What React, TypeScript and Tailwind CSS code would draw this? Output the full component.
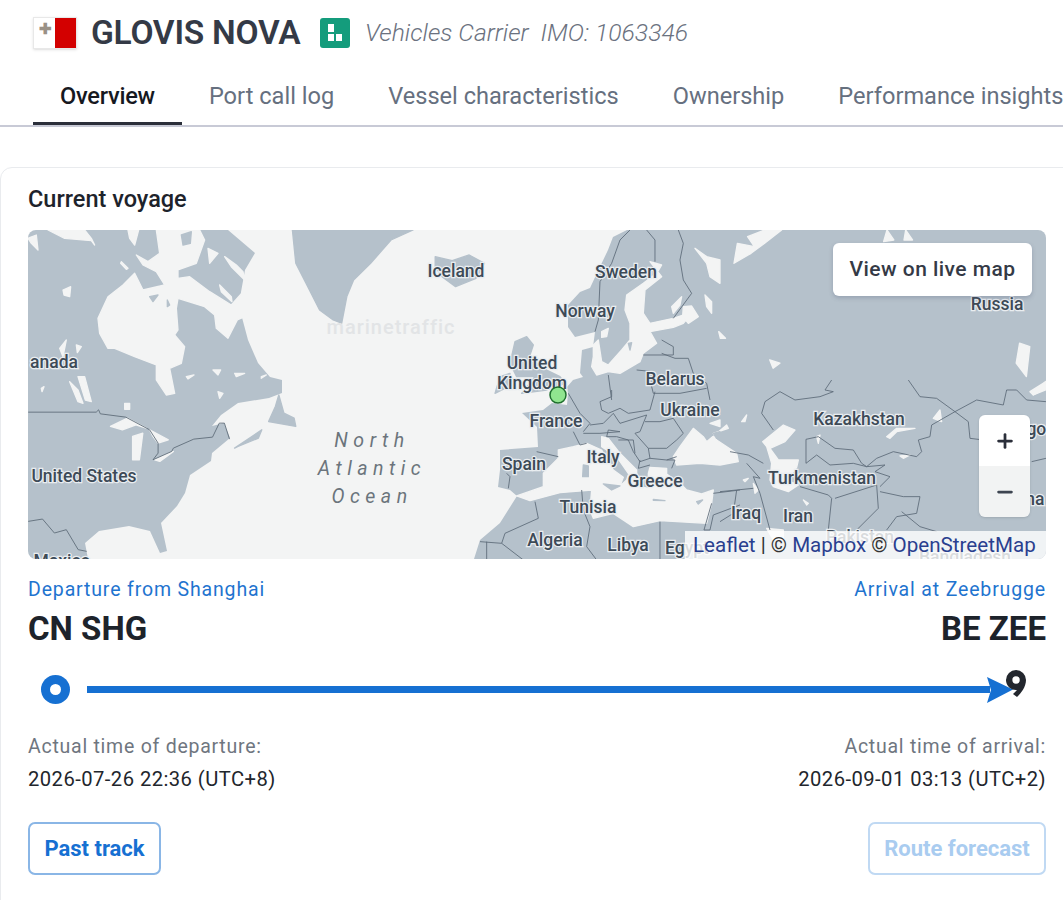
import { Plus, Minus } from "lucide-react";

const TABS = ["Port call log", "Vessel characteristics", "Ownership", "Performance insights"];

const LAND = "#b5c1cb";
const SEA = "#f3f4f4";
const BORDER = "#5d6b78";

// open ocean, page coordinates
const atlantic =
  "M228,230 L255,253 L245,270 L241,292 L240,310 L248,340 L258,363 L270,377 L282,380 L282,393 L269,398 L238,403 L221,415 L212,426 L224,423 L230,438 L212,453 L211,461 L190,475 L185,493 L177,506 L161,523 L167,551 L160,553 L150,531 L129,526 L99,531 L85,543 L88,559 L474,559 L480,540 L500,523 L517,496 L510,490 L498,487 L500,470 L500,450 L538,447 L537,427 L522,413 L543,410 L552,403 L567,405 L568,393 L567,387 L573,380 L583,377 L580,373 L582,350 L593,347 L595,332 L575,337 L568,327 L568,305 L580,292 L590,288 L597,273 L608,250 L613,237 L627,230 Z";

// crop of the Canadian north, 3x, origin 28,230
const canadaWater = [
  "M210,265 L240,200 L285,165 L320,130 L345,180 L410,165 L385,125 L345,105 L325,75 L360,95 L395,70 L385,0 L515,0 L530,30 L505,100 L450,120 L450,145 L485,140 L545,185 L610,225 L650,180 L650,260 L628,270 L600,325 L565,295 L560,255 L530,230 L450,205 L445,235 L450,300 L440,315 L470,350 L460,400 L425,415 L440,490 L415,495 L385,450 L385,405 L320,380 L260,355 L240,355 L215,310 Z",
  "M0,25 L25,15 L30,60 L10,40 Z",
  "M60,0 L170,0 L190,25 L200,45 L190,32 L110,25 Z",
  "M300,0 L332,0 L320,45 L305,25 Z",
  "M280,95 L300,115 L295,118 L278,100 Z",
  "M105,180 L128,170 L125,200 L108,195 Z",
  "M540,55 L570,70 L545,100 Z",
  "M590,80 L625,105 L645,125 L650,150 L610,110 Z",
  "M575,165 L610,200 L612,215 L580,185 Z",
  "M95,355 L115,330 L105,380 Z",
  "M145,345 L160,350 L148,368 Z",
  "M150,440 L170,440 L190,515 L172,510 Z",
  "M125,455 L150,480 L165,520 L150,515 Z",
  "M40,475 L48,470 L42,485 Z",
  "M475,440 L498,435 L480,447 Z",
  "M555,420 L578,420 L570,435 Z",
  "M620,430 L650,430 L625,440 Z",
  "M700,440 L715,435 L700,445 Z",
  "M570,485 L585,490 L575,505 Z",
  "M290,520 L305,520 L305,538 L290,538 Z",
];

const canadaIslands = [
  "M460,15 L490,5 L487,40 L465,45 Z",
  "M365,200 L390,195 L375,215 Z",
  "M418,210 L425,225 L418,230 Z",
];

// coordinates from the wider crop of the west half
const westLand = [
  "M860,0 L1215,0 L1150,30 L1090,100 L1040,150 L1020,200 L1005,280 L980,270 L940,240 L900,160 L870,100 Z",
  "M1280,80 L1330,92 L1380,75 L1425,100 L1400,145 L1340,170 L1300,140 L1280,110 Z",
  "M820,495 L835,550 L865,565 L870,590 L790,575 L810,530 Z",
  "M690,655 L770,600 L760,625 L700,650 Z",
];

const westWater = [
  "M325,590 L375,565 L430,595 L400,585 L360,600 Z",
  "M390,620 L420,610 L410,690 L390,690 Z",
  "M440,600 L495,630 L465,640 L450,620 Z",
  "M455,690 L510,665 L470,695 Z",
];

const westBorders = [
  "M83,547 L283,547 L290,540 L295,552 L370,562 L440,600 L465,640 L465,670 L450,690 L505,665 L510,655 L570,628 L625,622 L645,580 L660,580 L675,628",
  "M83,875 L125,868 L160,910 L195,900 L230,960 L255,965",
];

// northern Europe crop, 3x, origin 480,230
const balticWater = [
  "M340,345 L355,330 L365,395 L385,405 L425,360 L450,330 L450,280 L435,240 L440,195 L490,160 L530,130 L545,105 L510,95 L545,140 L495,180 L490,250 L510,280 L580,265 L640,245 L610,280 L580,292 L510,305 L530,340 L490,370 L480,395 L420,430 L385,425 L350,435 L335,410 L340,380 Z",
  "M610,230 L635,228 L655,260 L625,280 L608,260 Z",
  "M675,195 L695,215 L695,250 L680,230 Z",
  "M575,230 L605,200 L600,225 L580,250 Z",
  "M365,305 L385,295 L380,320 L365,322 Z",
  "M645,55 L680,80 L720,90 L720,160 L690,140 L680,100 Z",
];

const northLand = [
  "M105,335 L140,320 L160,345 L150,375 L170,400 L200,420 L240,440 L255,460 L200,480 L125,490 L165,440 L110,440 L90,400 Z",
  "M60,440 L90,430 L85,470 L45,490 Z",
  "M445,340 L455,338 L450,360 Z",
];

const northBorders = [
  "M450,0 L420,30 L395,100 L360,155 L355,270 L345,305",
  "M500,0 L525,30 L525,95",
  "M595,0 L610,40 L600,90 L610,150 L635,190 L580,265",
  "M545,330 L580,350 L580,375 L490,375 M545,370 L585,385 L625,385 L640,430 L680,460 L690,510",
  "M470,420 L520,425 L515,470 L520,490 L600,490 L680,475",
  "M385,435 L395,510",
];

// southern Europe crop, 3x, origin 480,390
const medWater = [
  "M110,318 L190,290 L190,250 L235,205 L235,180 L280,170 L320,160 L365,180 L400,240 L430,262 L420,288 L440,270 L445,255 L470,250 L480,290 L505,295 L505,250 L510,232 L560,235 L560,252 L600,280 L620,300 L665,312 L700,300 L695,340 L680,400 L540,392 L460,410 L400,370 L340,385 L330,360 L335,300 L240,308 L150,332 Z",
  "M365,140 L385,145 L420,190 L470,240 L470,255 L445,250 L410,200 L365,170 Z",
  "M580,200 L600,170 L640,115 L670,140 L680,155 L740,105 L745,115 L700,130 L710,150 L770,190 L775,215 L720,225 L660,220 L590,225 Z",
];

const medLand = [
  "M310,225 L325,228 L325,260 L308,260 Z",
  "M370,282 L420,288 L395,300 Z",
  "M520,328 L555,332 L520,331 Z",
  "M650,335 L668,330 L655,342 Z",
  "M700,130 L720,125 L710,145 Z",
];

const medBorders = [
  "M265,10 L300,70 L330,100 L310,125",
  "M395,0 L395,20 L360,35 L365,60 L385,70 L420,55 L445,70 L510,60 L525,5",
  "M495,95 L540,95 L580,85 L610,130 L590,150 L560,175 L505,175 L465,130 L480,125 L500,75",
  "M330,105 L370,100 L400,70 L420,100 L500,75",
  "M310,130 L360,130 L420,125 L385,120 L380,140 L410,140 L445,150 L460,185 L480,215 L510,205 L505,175",
  "M415,150 L460,150 L465,190",
  "M510,205 L560,210 L590,200",
  "M480,210 L475,235 L510,225",
  "M560,210 L585,210 L575,235",
  "M80,250 L90,260 L85,295",
  "M170,185 L235,200",
  "M280,125 L300,165 L320,160",
  "M165,335 L175,385 L75,430 L65,460 L0,455 M20,455 L20,510 M65,460 L130,510",
  "M305,300 L310,360 L330,410 L320,470 L350,510",
  "M540,395 L540,510",
  "M695,340 L672,420 L690,420 L700,375 L780,345 M700,310 L780,300",
];

// central Asia crop, 3x, origin 720,380
const asiaWater = [
  "M128,185 L165,155 L190,135 L225,150 L195,185 L150,205 L175,240 L235,240 L230,262 L200,300 L235,315 L205,335 L160,320 L150,300 L155,250 L140,200 Z",
  "M500,170 L530,145 L585,145 L530,155 L510,175 Z",
  "M290,170 L300,165 L295,190 Z",
  "M640,115 L660,90 L665,125 Z",
  "M65,125 L80,105 L75,125 Z",
  "M540,228 L570,225 L550,235 Z",
  "M70,300 L85,295 L75,305 Z",
  "M100,310 L115,330 L105,340 Z",
  "M250,360 L265,370 L260,375 Z",
  "M930,35 L978,5 L978,25 L940,45 Z",
  "M140,445 L190,450 L190,480 L160,480 Z",
  "M-30,130 L0,120 L0,140 Z",
];

const asiaBorders = [
  "M160,150 L125,100 L135,65 L180,35 L225,60 L300,50 L340,35 L315,30 L335,0",
  "M565,0 L600,50 L650,55 L705,95 L670,115 L635,135 L630,170 L595,180 L605,215 L590,230 L520,215 L470,235 L440,260 L425,250 L400,210 L345,205 L295,170 L258,178 L258,250",
  "M705,95 L770,60 L850,75 L860,30 L890,30 L920,60 L978,65",
  "M705,95 L745,125 L750,175 L790,180",
  "M935,245 L978,235",
  "M258,250 L290,225 L330,255 L400,250 L440,260 L495,255 L465,275 L510,290 L480,320",
  "M30,215 L85,225 L130,250 M80,250 L120,295 L100,290 L120,340 L150,450",
  "M240,320 L325,345 L335,355 L325,450",
  "M345,355 L470,315 L475,385 L410,450",
  "M480,335 L550,350 L600,350 L590,400 L530,410 L500,450",
  "M545,395 L600,440 L650,455",
  "M0,335 L50,330 L100,325 M50,330 L40,400 L0,425",
];

// top of Russia, same scale as the west half but origin 530,230
const russiaWater = [
  "M660,50 L640,20 L690,0 L740,0 L690,40 L650,70 L600,100 L610,40 Z",
  "M1050,0 L1070,30 L1040,35 Z",
  "M1105,0 L1125,30 L1100,30 Z",
  "M1440,340 L1470,350 L1460,440 L1430,400 Z",
  "M1480,490 L1517,455 L1517,480 L1480,495 Z",
  "M705,390 L735,400 L715,415 Z",
  "M555,305 L575,325 L560,325 Z",
];

const labels: [string, number, number][] = [
  ["Iceland", 456, 277],
  ["Sweden", 626, 278],
  ["Norway", 585, 317],
  ["United", 532, 369],
  ["Kingdom", 532, 389],
  ["anada", 54, 368],
  ["United States", 84, 482],
  ["Belarus", 675, 385],
  ["Ukraine", 690, 416],
  ["France", 556, 427],
  ["Spain", 524, 470],
  ["Italy", 603, 463],
  ["Greece", 655, 487],
  ["Tunisia", 588, 513],
  ["Algeria", 555, 546],
  ["Libya", 628, 551],
  ["Egypt", 687, 554],
  ["Iraq", 746, 519],
  ["Iran", 798, 522],
  ["Turkmenistan", 822, 484],
  ["Kazakhstan", 859, 425],
  ["Russia", 997, 310],
  ["Mexico", 62, 567],
  ["Mongolia", 1028, 435],
  ["China", 1022, 505],
  ["Pakistan", 860, 543],
  ["Bangladesh", 965, 563],
];

function Sea({ shapes }: { shapes: string[] }) {
  return (
    <>
      {shapes.map((d) => (
        <path key={d} d={d} fill={SEA} stroke={SEA} strokeWidth="4" strokeLinejoin="round" />
      ))}
    </>
  );
}

function Land({ shapes }: { shapes: string[] }) {
  return (
    <>
      {shapes.map((d) => (
        <path key={d} d={d} fill={LAND} stroke={LAND} strokeWidth="4" strokeLinejoin="round" />
      ))}
    </>
  );
}

function Borders({ shapes }: { shapes: string[] }) {
  return (
    <>
      {shapes.map((d) => (
        <path key={d} d={d} fill="none" stroke={BORDER} strokeWidth="2.6" strokeLinejoin="round" />
      ))}
    </>
  );
}

function VoyageMap() {
  return (
    <svg viewBox="28 230 1018 329" className="absolute inset-0 w-full h-full">
      <rect x="28" y="230" width="1018" height="329" fill={LAND} />
      <path d={atlantic} fill={SEA} />
      <g transform="translate(28,230) scale(0.3333)">
        <Sea shapes={canadaWater} />
        <Land shapes={canadaIslands} />
      </g>
      <g transform="translate(0,230) scale(0.34,0.333)">
        <Land shapes={westLand} />
        <Sea shapes={westWater} />
        <Borders shapes={westBorders} />
      </g>
      <g transform="translate(530,230) scale(0.34,0.333)">
        <Sea shapes={russiaWater} />
      </g>
      <g transform="translate(480,230) scale(0.3333)">
        <Sea shapes={balticWater} />
        <Land shapes={northLand} />
        <Borders shapes={northBorders} />
      </g>
      <g transform="translate(480,390) scale(0.3333)">
        <Sea shapes={medWater} />
        <Land shapes={medLand} />
        <Borders shapes={medBorders} />
      </g>
      <g transform="translate(720,380) scale(0.3333)">
        <Sea shapes={asiaWater} />
        <Borders shapes={asiaBorders} />
      </g>
      <g className="font-['Roboto',sans-serif] font-medium text-[17.5px] [paint-order:stroke]" textAnchor="middle" fill="#3d4a57" stroke="#e9edf0" strokeWidth="2.5">
        {labels.map(([t, x, y]) => (
          <text key={t} x={x} y={y}>
            {t}
          </text>
        ))}
      </g>
      <g className="font-['Roboto',sans-serif] italic text-[19.5px] tracking-[5.5px]" textAnchor="middle" fill="#6b747c">
        <text x="372" y="447">North</text>
        <text x="372" y="475">Atlantic</text>
        <text x="372" y="503">Ocean</text>
      </g>
      <text x="391" y="334" textAnchor="middle" className="font-['Roboto',sans-serif] font-medium text-[20px] tracking-[1px]" fill="#e2e4e6">
        marinetraffic
      </text>
      <circle cx="558" cy="395" r="8" fill="#90e58f" stroke="#1f6f2e" strokeWidth="1.5" />
    </svg>
  );
}

function VoyageBar() {
  return (
    <div className="flex items-center pl-[13px] mt-[27px] h-[30px] relative">
      <div className="w-[29px] h-[29px] rounded-full bg-[#1670d2] flex items-center justify-center shrink-0">
        <div className="w-[11px] h-[11px] rounded-full bg-white" />
      </div>
      <div className="h-[7px] flex-1 bg-[#1670d2] ml-[17px] mr-[56px]" />
      <svg width="60" height="40" viewBox="0 0 60 40" className="absolute right-0 top-[-6px]">
        <path d="M1 9 L27 21.5 L1 35 L5 22 Z" fill="#1670d2" />
        <path
          fillRule="evenodd"
          d="M30 2 A10 10 0 0 1 40 12 C40 19 35 25 31 29 L27 26 C29 24 30 23 31 22 A10 10 0 0 1 20 12 A10 10 0 0 1 30 2 Z M30 8.3 A3.7 3.7 0 1 0 30.1 15.7 A3.7 3.7 0 1 0 30 8.3 Z"
          fill="#23272e"
        />
      </svg>
    </div>
  );
}

export default function App() {
  return (
    <div className="w-[1063px] h-[900px] overflow-hidden bg-white font-['Roboto',sans-serif]">
      <div className="flex items-center h-[66px] pl-[33px]">
        <div className="w-[44px] h-[32px] flex border border-[#e8e8e8] shadow-sm">
          <div className="w-1/2 bg-white relative">
            <span className="absolute left-[5px] top-[4px] text-[#9a9186] text-[15px] leading-[15px] font-bold">✚</span>
          </div>
          <div className="w-1/2 bg-[#d30000]" />
        </div>
        <h1 className="ml-[14px] w-[209px] whitespace-nowrap text-[33.5px] font-semibold text-[#343a46] tracking-[-0.25px]">GLOVIS NOVA</h1>
        <div className="ml-[20px] w-[30px] h-[30px] rounded-[3px] bg-[#149c7c] flex items-center justify-center">
          <svg width="16" height="20" viewBox="0 0 16 20" fill="white">
            <rect x="1" y="1" width="6" height="8" />
            <rect x="1" y="11" width="6" height="7" />
            <rect x="9" y="11" width="6" height="7" />
          </svg>
        </div>
        <span className="ml-[15px] text-[24.7px] italic font-light text-[#6b7280] whitespace-pre">Vehicles Carrier  IMO: 1063346</span>
      </div>

      <div className="flex h-[61px] border-b-2 border-[#c8cad6] whitespace-nowrap text-[23.6px]">
        <div className="ml-[33px] px-[27px] pt-[13px] h-[59px] border-b-[3px] border-[#2b2f3a] text-[#16191f] font-medium tracking-[-0.25px]">Overview</div>
        {TABS.map((tab) => (
          <div key={tab} className="px-[27px] pt-[13px] text-[#66707f]">
            {tab}
          </div>
        ))}
      </div>

      <div className="mt-[40px] w-[1080px] border border-[#e9ebee] rounded-tl-[12px] pl-[27px] pr-[33px] pt-[16px] pb-[60px]">
        <h2 className="text-[23.5px] font-medium text-[#1d232b] leading-[30px]">Current voyage</h2>
        <div className="relative mt-[16px] h-[329px] rounded-[8px] overflow-hidden">
          <VoyageMap />
          <button className="absolute right-[14px] top-[13px] w-[199px] h-[53px] bg-white rounded-[6px] shadow-[0_2px_4px_rgba(80,90,120,0.3)] text-[21px] font-medium text-[#343a46] tracking-[0.45px]">
            View on live map
          </button>
          <div className="absolute right-[16px] top-[185px] w-[51px] h-[102px] rounded-[6px] overflow-hidden shadow-sm">
            <div className="h-[51px] bg-white flex items-center justify-center">
              <Plus size={22} strokeWidth={3} className="text-[#2b2f3a]" />
            </div>
            <div className="h-[51px] bg-[#f2f3f3] flex items-center justify-center">
              <Minus size={22} strokeWidth={3} className="text-[#3d4450]" />
            </div>
          </div>
          <div className="absolute right-0 bottom-0 w-[361px] h-[28px] bg-white/80 pl-[8px] text-[20.6px] leading-[28px] text-[#333] whitespace-nowrap">
            <span className="text-[#2a3f8f]">Leaflet</span> | © <span className="text-[#2a3f8f]">Mapbox</span> © <span className="text-[#2a3f8f]">OpenStreetMap</span>
          </div>
        </div>

        <div className="flex justify-between mt-[18px] text-[19.5px] leading-[26px] text-[#1f74cf] tracking-[0.85px]">
          <span>Departure from Shanghai</span>
          <span>Arrival at Zeebrugge</span>
        </div>
        <div className="flex justify-between mt-[8px] text-[33px] leading-[36px] font-bold text-[#1d232b]">
          <span>CN SHG</span>
          <span>BE ZEE</span>
        </div>

        <VoyageBar />

        <div className="flex justify-between mt-[30px] text-[19.5px] leading-[26px] text-[#6f7680] tracking-[0.75px]">
          <span>Actual time of departure:</span>
          <span>Actual time of arrival:</span>
        </div>
        <div className="flex justify-between mt-[6px] text-[20.2px] leading-[26px] text-[#22262c] tracking-[0.45px]">
          <span>2026-07-26 22:36 (UTC+8)</span>
          <span>2026-09-01 03:13 (UTC+2)</span>
        </div>

        <div className="flex justify-between mt-[30px]">
          <button className="w-[133px] h-[53px] rounded-[7px] border-2 border-[#8ab6e6] text-[22px] font-bold text-[#1670d2]">Past track</button>
          <button className="w-[178px] h-[53px] rounded-[7px] border-2 border-[#c0d9f3] text-[22px] font-bold text-[#a9ccf0]">Route forecast</button>
        </div>
      </div>
    </div>
  );
}
